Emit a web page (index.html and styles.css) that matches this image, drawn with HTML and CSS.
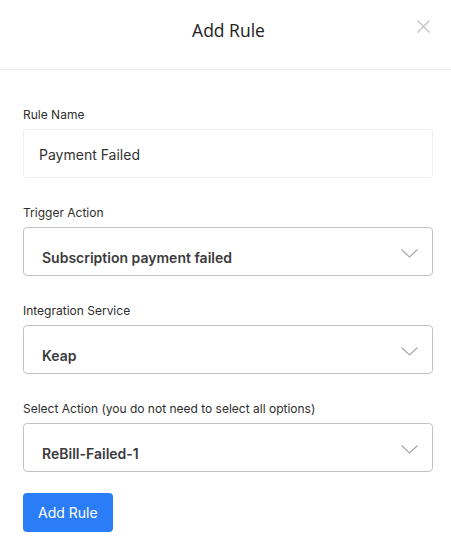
FILE: index.html
```html
<!DOCTYPE html>
<html>
<head>
<meta charset="utf-8">
<link rel="stylesheet" href="styles.css">
</head>
<body>
<div class="modal">
  <header class="modal-header">
    <span></span>
    <h1 class="modal-title">Add Rule</h1>
    <button class="close" aria-label="Close">
      <svg width="13" height="13" viewBox="0 0 13 13"><path d="M0.5 0.5 L12.5 12.5 M12.5 0.5 L0.5 12.5" stroke="#c4c4c4" stroke-width="1.4" fill="none"/></svg>
    </button>
  </header>
  <div class="modal-body">
    <div class="field">
      <label class="label">Rule Name</label>
      <div class="input">Payment Failed</div>
    </div>
    <div class="field">
      <label class="label">Trigger Action</label>
      <div class="select"><span class="select-text">Subscription payment failed</span>
        <svg class="chev" width="17" height="9" viewBox="0 0 17 9"><path d="M0.5 0.5 L8.5 8 L16.5 0.5" stroke="#a8a8a8" stroke-width="1.2" fill="none"/></svg></div>
    </div>
    <div class="field">
      <label class="label">Integration Service</label>
      <div class="select"><span class="select-text">Keap</span>
        <svg class="chev" width="17" height="9" viewBox="0 0 17 9"><path d="M0.5 0.5 L8.5 8 L16.5 0.5" stroke="#a8a8a8" stroke-width="1.2" fill="none"/></svg></div>
    </div>
    <div class="field">
      <label class="label">Select Action (you do not need to select all options)</label>
      <div class="select"><span class="select-text">ReBill-Failed-1</span>
        <svg class="chev" width="17" height="9" viewBox="0 0 17 9"><path d="M0.5 0.5 L8.5 8 L16.5 0.5" stroke="#a8a8a8" stroke-width="1.2" fill="none"/></svg></div>
    </div>
    <button class="btn-primary">Add Rule</button>
  </div>
</div>
</body>
</html>
```

FILE: styles.css
```css
html, body {
  margin: 0;
  padding: 0;
  background: #ffffff;
}
body {
  font-family: Inter, "Liberation Sans", sans-serif;
  color: #333;
}
.modal {
  width: 451px;
}
.modal-header {
  height: 70px;
  box-sizing: border-box;
  border-bottom: 1px solid #ebebeb;
  display: grid;
  grid-template-columns: 1fr auto 1fr;
  align-items: start;
  padding: 0 21px 0 27px;
}
.modal-title {
  margin: 18px 0 0 0;
  font-family: "Open Sans", sans-serif;
  font-weight: 400;
  font-size: 17.5px;
  line-height: 24px;
  color: #222;
}
.close {
  justify-self: end;
  margin-top: 20px;
  padding: 0;
  border: 0;
  background: none;
  width: 13px;
  height: 13px;
  display: block;
}
.close svg { display: block; }
.modal-body {
  padding: 36px 18px 0 23px;
}
.field {
  margin-bottom: 26px;
}
.label {
  display: block;
  font-size: 12px;
  line-height: 18px;
  color: #2e2e2e;
  margin-bottom: 5px;
}
.input {
  box-sizing: border-box;
  height: 49px;
  border: 1px solid #efefef;
  border-radius: 3px;
  padding: 15px 15px 0 15px;
  font-size: 14px;
  line-height: 20px;
  color: #333;
}
.select {
  box-sizing: border-box;
  height: 49px;
  border: 1px solid #c2c2c2;
  border-radius: 4px;
  display: flex;
  align-items: center;
  justify-content: space-between;
  padding: 0 14px 0 18px;
}
.select-text {
  font-size: 14px;
  font-weight: 600;
  line-height: 20px;
  color: #3b3b3b;
  margin-top: 13px;
}
.chev {
  display: block;
  margin-top: 3px;
}
.field:last-of-type {
  margin-bottom: 21px;
}
.btn-primary {
  font-family: Inter, "Liberation Sans", sans-serif;
  height: 39px;
  padding: 0 15px;
  border: 0;
  border-radius: 4px;
  background: #2b7df7;
  color: #fff;
  font-size: 14px;
  line-height: 20px;
}
```
